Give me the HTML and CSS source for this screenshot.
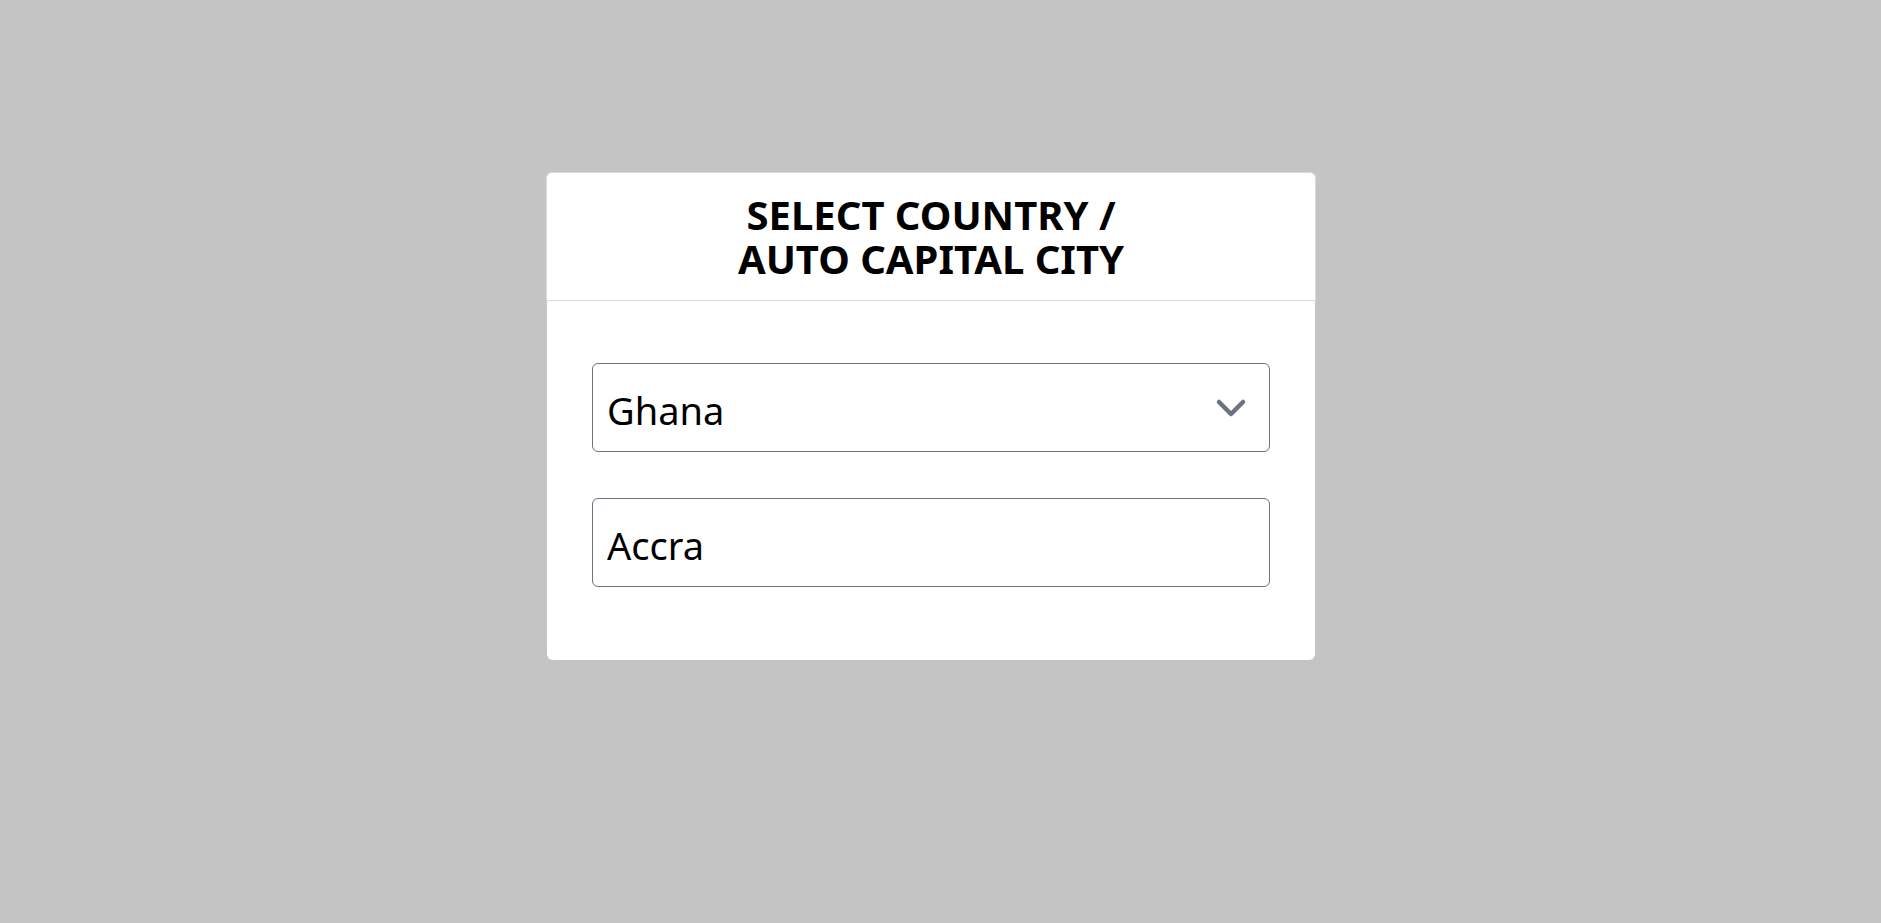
FILE: index.html
```html
<!DOCTYPE html>
<html lang="en">
<head>
<meta charset="utf-8">
<title>Select Country / Auto Capital City</title>
<link rel="stylesheet" href="styles.css">
</head>
<body>
<div class="page">
  <div class="card">
    <div class="card-header">
      <h1 class="title">SELECT COUNTRY /<br>AUTO CAPITAL CITY</h1>
    </div>
    <div class="card-body">
      <div class="select-wrap">
        <select class="field select">
          <option>Ghana</option>
        </select>
        <svg class="chevron" viewBox="0 0 20 20" width="60" height="60" aria-hidden="true">
          <path d="M6 8l4 4 4-4" fill="none" stroke="#6b7280" stroke-width="1.5" stroke-linecap="round" stroke-linejoin="round"/>
        </svg>
      </div>
      <input class="field" type="text" value="Accra">
    </div>
  </div>
</div>
</body>
</html>
```
FILE: styles.css
```css
html, body {
  margin: 0;
  padding: 0;
  background: #c4c4c4;
}
body {
  font-family: "Noto Sans", "Open Sans", sans-serif;
  color: #000;
}
.page {
  min-height: 923px;
  box-sizing: border-box;
  padding: 173px 0 0 547px;
  display: flex;
  align-items: flex-start;
}
.card {
  width: 768px;
  background: #fff;
  border-radius: 6px;
  display: flex;
  flex-direction: column;
}
.card-header {
  margin: -1px -1px 0;
  border: 1px solid #dcdcdc;
  border-radius: 6px 6px 0 0;
  background: #fff;
  padding: 20px 0 19px;
  text-align: center;
}
.title {
  margin: 0;
  font-size: 40px;
  line-height: 44px;
  font-weight: 700;
  color: #000;
}
.card-body {
  padding: 62px 45px 73px;
  display: flex;
  flex-direction: column;
  gap: 46px;
}
.select-wrap {
  position: relative;
}
.field {
  display: block;
  width: 100%;
  box-sizing: border-box;
  height: 89px;
  margin: 0;
  padding: 5px 14px 0;
  border: 1px solid #6b7280;
  border-radius: 6px;
  background: #fff;
  font-family: "Noto Sans", "Open Sans", sans-serif;
  font-size: 38px;
  color: #000;
  outline: none;
}
.select {
  appearance: none;
  -webkit-appearance: none;
}
.chevron {
  position: absolute;
  right: 9px;
  top: 50%;
  margin-top: -30px;
  pointer-events: none;
}
```
